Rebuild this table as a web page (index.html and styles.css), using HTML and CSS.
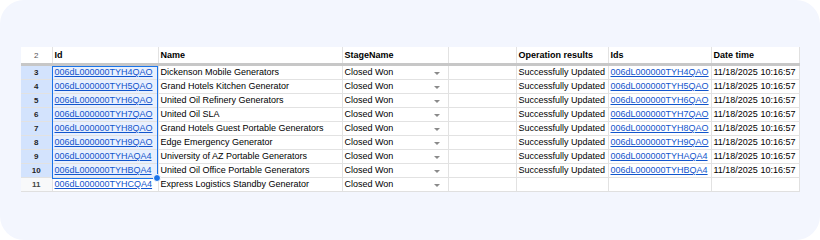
FILE: index.html
```html
<!DOCTYPE html>
<html>
<head>
<meta charset="utf-8">
<link rel="stylesheet" href="styles.css">
</head>
<body>
<div class="panel">
  <div class="sheet">
    <table class="grid">
      <colgroup>
        <col class="c-rn"><col class="c-id"><col class="c-name"><col class="c-stage"><col class="c-blank"><col class="c-op"><col class="c-ids"><col class="c-date">
      </colgroup>
      <thead>
        <tr class="hdr">
          <td class="rn">2</td><td>Id</td><td>Name</td><td>StageName</td><td></td><td>Operation results</td><td>Ids</td><td>Date time</td>
        </tr>
      </thead>
      <tbody>
        <tr class="sel"><td class="rn">3</td><td class="id"><a>006dL000000TYH4QAO</a></td><td>Dickenson Mobile Generators</td><td class="stage">Closed Won<span class="dd"></span></td><td></td><td>Successfully Updated</td><td><a>006dL000000TYH4QAO</a></td><td>11/18/2025 10:16:57</td></tr>
        <tr class="sel"><td class="rn">4</td><td class="id"><a>006dL000000TYH5QAO</a></td><td>Grand Hotels Kitchen Generator</td><td class="stage">Closed Won<span class="dd"></span></td><td></td><td>Successfully Updated</td><td><a>006dL000000TYH5QAO</a></td><td>11/18/2025 10:16:57</td></tr>
        <tr class="sel"><td class="rn">5</td><td class="id"><a>006dL000000TYH6QAO</a></td><td>United Oil Refinery Generators</td><td class="stage">Closed Won<span class="dd"></span></td><td></td><td>Successfully Updated</td><td><a>006dL000000TYH6QAO</a></td><td>11/18/2025 10:16:57</td></tr>
        <tr class="sel"><td class="rn">6</td><td class="id"><a>006dL000000TYH7QAO</a></td><td>United Oil SLA</td><td class="stage">Closed Won<span class="dd"></span></td><td></td><td>Successfully Updated</td><td><a>006dL000000TYH7QAO</a></td><td>11/18/2025 10:16:57</td></tr>
        <tr class="sel"><td class="rn">7</td><td class="id"><a>006dL000000TYH8QAO</a></td><td>Grand Hotels Guest Portable Generators</td><td class="stage">Closed Won<span class="dd"></span></td><td></td><td>Successfully Updated</td><td><a>006dL000000TYH8QAO</a></td><td>11/18/2025 10:16:57</td></tr>
        <tr class="sel"><td class="rn">8</td><td class="id"><a>006dL000000TYH9QAO</a></td><td>Edge Emergency Generator</td><td class="stage">Closed Won<span class="dd"></span></td><td></td><td>Successfully Updated</td><td><a>006dL000000TYH9QAO</a></td><td>11/18/2025 10:16:57</td></tr>
        <tr class="sel"><td class="rn">9</td><td class="id"><a>006dL000000TYHAQA4</a></td><td>University of AZ Portable Generators</td><td class="stage">Closed Won<span class="dd"></span></td><td></td><td>Successfully Updated</td><td><a>006dL000000TYHAQA4</a></td><td>11/18/2025 10:16:57</td></tr>
        <tr class="sel"><td class="rn">10</td><td class="id"><a>006dL000000TYHBQA4</a></td><td>United Oil Office Portable Generators</td><td class="stage">Closed Won<span class="dd"></span></td><td></td><td>Successfully Updated</td><td><a>006dL000000TYHBQA4</a></td><td>11/18/2025 10:16:57</td></tr>
        <tr><td class="rn">11</td><td><a>006dL000000TYHCQA4</a></td><td>Express Logistics Standby Generator</td><td class="stage">Closed Won<span class="dd"></span></td><td></td><td></td><td></td><td></td></tr>
      </tbody>
    </table>
    <div class="selbox"><span class="handle"></span></div>
  </div>
</div>
</body>
</html>
```
FILE: styles.css
```css
html, body {
  margin: 0;
  padding: 0;
  background: #ffffff;
}
.panel {
  width: 820px;
  height: 240px;
  background: #f3f6fe;
  border-radius: 24px;
  box-sizing: border-box;
  padding: 47px 0 0 21px;
}
.sheet {
  position: relative;
  width: 778px;
}
.grid {
  border-collapse: collapse;
  table-layout: fixed;
  width: 778px;
  font-family: "Liberation Sans", Arial, sans-serif;
  font-size: 9px;
  color: #000;
  background: #fff;
}
.c-rn { width: 31px; }
.c-id { width: 106px; }
.c-name { width: 184px; }
.c-stage { width: 106px; }
.c-blank { width: 68px; }
.c-op { width: 92px; }
.c-ids { width: 103px; }
.c-date { width: 88px; }
.grid td {
  height: 13px;
  padding: 0 2px;
  border: 1px solid #e2e2e2;
  white-space: nowrap;
  overflow: hidden;
  line-height: 13px;
  vertical-align: middle;
}
.grid .hdr td {
  height: 15px;
  line-height: 15px;
  padding-top: 1px;
  font-weight: bold;
  border-top: none;
  border-bottom: 3px solid #c7c7c7;
}
.grid td.rn {
  text-align: center;
  font-size: 8px;
  font-weight: bold;
  color: #444;
  background: #f8f9fa;
  border-left: none;
}
.grid .hdr td.rn {
  background: #fff;
  font-weight: normal;
  color: #555;
}
.grid tr.sel td.rn {
  background: #d3e3fd;
  color: #1f1f1f;
}
.grid tr.sel td.id {
  background: #e8f0fe;
}
.grid a {
  color: #1155cc;
  text-decoration: underline;
}
.grid td.stage {
  position: relative;
}
.dd {
  position: absolute;
  right: 8px;
  top: 6px;
  width: 0;
  height: 0;
  border-left: 3px solid transparent;
  border-right: 3px solid transparent;
  border-top: 3px solid #8a8a8a;
}
.grid tbody tr:last-child td {
  border-bottom: 1px solid #e0e0e0;
}
.grid td:last-child {
  border-right: 1px solid #e0e0e0;
}
.selbox {
  position: absolute;
  left: 31px;
  top: 19px;
  width: 106px;
  height: 113px;
  border: 1px solid #1a73e8;
  box-sizing: border-box;
  pointer-events: none;
}
.handle {
  position: absolute;
  right: -4px;
  bottom: -4px;
  width: 6px;
  height: 6px;
  border-radius: 50%;
  background: #1a73e8;
  border: 1px solid #fff;
}
```
